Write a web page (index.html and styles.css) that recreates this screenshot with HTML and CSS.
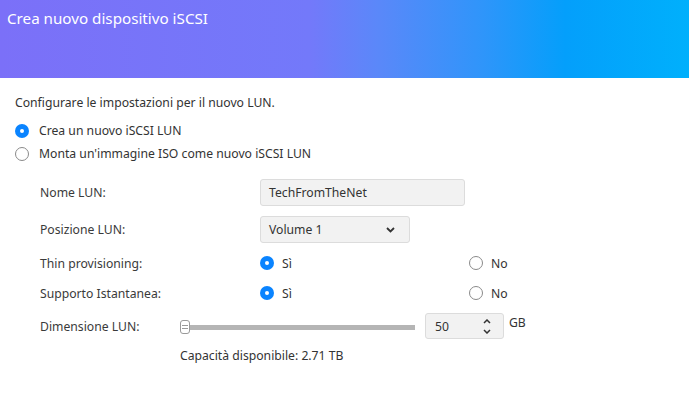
FILE: index.html
```html
<!DOCTYPE html>
<html lang="it">
<head>
<meta charset="utf-8">
<title>Crea nuovo dispositivo iSCSI</title>
<link rel="stylesheet" href="styles.css">
</head>
<body>
<div class="dialog">
  <header class="header">
    <h1 class="title">Crea nuovo dispositivo iSCSI</h1>
  </header>
  <main class="content">
    <p class="intro">Configurare le impostazioni per il nuovo LUN.</p>
    <div class="mode">
      <label class="radio-row"><span class="radio checked"></span><span>Crea un nuovo iSCSI LUN</span></label>
      <label class="radio-row"><span class="radio"></span><span>Monta un'immagine ISO come nuovo iSCSI LUN</span></label>
    </div>
    <div class="form">
      <div class="row row-field">
        <span class="label">Nome LUN:</span>
        <div class="input text-input">TechFromTheNet</div>
      </div>
      <div class="row row-field">
        <span class="label">Posizione LUN:</span>
        <div class="input select">
          <span>Volume 1</span>
          <svg class="chev" width="9" height="6" viewBox="0 0 9 6"><path d="M1 1 L4.5 4.5 L8 1" fill="none" stroke="#333" stroke-width="1.8"/></svg>
        </div>
      </div>
      <div class="row row-radio">
        <span class="label">Thin provisioning:</span>
        <div class="choices">
          <label class="radio-row"><span class="radio checked"></span><span>Sì</span></label>
          <label class="radio-row"><span class="radio"></span><span>No</span></label>
        </div>
      </div>
      <div class="row row-radio">
        <span class="label">Supporto Istantanea:</span>
        <div class="choices">
          <label class="radio-row"><span class="radio checked"></span><span>Sì</span></label>
          <label class="radio-row"><span class="radio"></span><span>No</span></label>
        </div>
      </div>
      <div class="row row-size">
        <span class="label label-short">Dimensione LUN:</span>
        <div class="slider">
          <span class="thumb"><span class="grip"></span></span>
          <span class="track"></span>
        </div>
        <div class="input number">
          <span>50</span>
          <span class="spin">
            <svg width="8" height="5" viewBox="0 0 8 5"><path d="M1 4 L4 1 L7 4" fill="none" stroke="#333" stroke-width="1.5"/></svg>
            <svg width="8" height="5" viewBox="0 0 8 5"><path d="M1 1 L4 4 L7 1" fill="none" stroke="#333" stroke-width="1.5"/></svg>
          </span>
        </div>
        <span class="unit">GB</span>
      </div>
      <p class="capacity">Capacità disponibile: 2.71 TB</p>
    </div>
  </main>
</div>
</body>
</html>
```
FILE: styles.css
```css
* { box-sizing: border-box; }
html, body { margin: 0; padding: 0; background: #fff; }
body {
  font-family: "Noto Sans", "Open Sans", sans-serif;
  font-size: 12.2px;
  color: #333;
}
.dialog { width: 689px; height: 400px; background: #fff; }
.header {
  height: 78px;
  background: linear-gradient(90deg, #7b70f8 0%, #7379fa 45%, #5a88f9 55%, #2f95fa 70%, #049ffb 82%, #00b0fc 100%);
  padding: 8px 7px 0;
}
.title {
  margin: 0;
  font-size: 15.2px;
  font-weight: 400;
  color: #fff;
  line-height: 20px;
}
.content { padding: 16px 15px 0; }
.intro { margin: 0 0 7px; line-height: 18px; }
.radio-row {
  display: flex;
  align-items: center;
  gap: 10px;
  height: 23px;
}
.radio {
  width: 14px;
  height: 14px;
  border-radius: 50%;
  border: 1.5px solid #8a8a8a;
  background: #fff;
  flex: none;
  position: relative;
}
.radio.checked {
  border: none;
  background: #0a84ff;
}
.radio.checked::after {
  content: "";
  position: absolute;
  left: 5px;
  top: 5px;
  width: 4px;
  height: 4px;
  border-radius: 50%;
  background: #fff;
}
.form {
  margin-top: 14px;
  padding-left: 25px;
  display: flex;
  flex-direction: column;
  gap: 10px;
}
.row { display: flex; align-items: center; }
.label { width: 220px; flex: none; color: #3a3a3a; }
.row-field { height: 27px; }
.row-radio { height: 20px; }
.input {
  height: 27px;
  background: #f2f2f2;
  border: 1px solid #dcdcdc;
  border-radius: 3px;
  display: flex;
  align-items: center;
  padding-left: 8px;
}
.text-input { width: 205px; }
.select { width: 150px; justify-content: space-between; padding-right: 14px; }
.choices { display: grid; grid-template-columns: 209px auto; }
.choices .radio-row { gap: 8px; height: 20px; }
.row-size { height: 26px; }
.label-short { width: 140px; }
.slider {
  width: 235px;
  display: flex;
  align-items: center;
  height: 26px;
  position: relative;
  top: 1px;
}
.thumb {
  width: 10px;
  height: 14px;
  border: 1px solid #9a9a9a;
  border-radius: 3px;
  background: #fff;
  flex: none;
  display: flex;
  align-items: center;
  justify-content: center;
}
.grip {
  width: 6px;
  height: 4px;
  border-top: 1px solid #9a9a9a;
  border-bottom: 1px solid #9a9a9a;
}
.track { flex: 1; height: 5px; background: #b5b5b5; }
.number {
  width: 79px;
  height: 26px;
  margin-left: 10px;
  justify-content: space-between;
  padding-left: 9px;
  padding-right: 12px;
}
.spin { display: flex; flex-direction: column; gap: 5px; }
.spin svg { display: block; }
.unit { align-self: flex-start; margin-left: 5px; line-height: 18px; margin-top: 1px; }
.capacity { margin: -3px 0 0 140px; line-height: 20px; }
```
